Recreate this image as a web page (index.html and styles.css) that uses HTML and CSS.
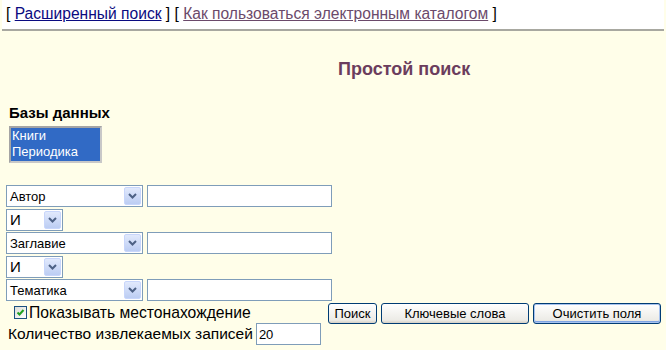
FILE: index.html
```html
<!DOCTYPE html>
<html>
  <head>
    <title>Простой поиск</title>
    <link rel="stylesheet" href="styles.css">
  </head>

  <body>
    <div id="topbar">
      [ <a href="#" class="link">Расширенный поиск</a> ]
      [ <a href="#" class="link visited">Как пользоваться электронным каталогом</a> ]
    </div>

    <h1 id="title">Простой поиск</h1>

    <div id="databases">
      <p id="databases_head">Базы данных</p>
      <div class="listbox">
        <div class="listbox_item">Книги</div>
        <div class="listbox_item">Периодика</div>
      </div>
    </div>

    <div id="search">
      <div class="row">
        <span class="combo combo_wide">
          <span class="combo_value">Автор</span>
          <span class="combo_btn"><svg width="9" height="6" viewBox="0 0 9 6"><path d="M1 1 L4.5 4.5 L8 1" fill="none" stroke="#4d6185" stroke-width="2"/></svg></span>
        </span>
        <span class="field field_wide"></span>
      </div>
      <div class="row">
        <span class="combo combo_small">
          <span class="combo_value">И</span>
          <span class="combo_btn"><svg width="9" height="6" viewBox="0 0 9 6"><path d="M1 1 L4.5 4.5 L8 1" fill="none" stroke="#4d6185" stroke-width="2"/></svg></span>
        </span>
      </div>
      <div class="row">
        <span class="combo combo_wide">
          <span class="combo_value">Заглавие</span>
          <span class="combo_btn"><svg width="9" height="6" viewBox="0 0 9 6"><path d="M1 1 L4.5 4.5 L8 1" fill="none" stroke="#4d6185" stroke-width="2"/></svg></span>
        </span>
        <span class="field field_wide"></span>
      </div>
      <div class="row">
        <span class="combo combo_small">
          <span class="combo_value">И</span>
          <span class="combo_btn"><svg width="9" height="6" viewBox="0 0 9 6"><path d="M1 1 L4.5 4.5 L8 1" fill="none" stroke="#4d6185" stroke-width="2"/></svg></span>
        </span>
      </div>
      <div class="row">
        <span class="combo combo_wide">
          <span class="combo_value">Тематика</span>
          <span class="combo_btn"><svg width="9" height="6" viewBox="0 0 9 6"><path d="M1 1 L4.5 4.5 L8 1" fill="none" stroke="#4d6185" stroke-width="2"/></svg></span>
        </span>
        <span class="field field_wide"></span>
      </div>

      <div id="bottom">
        <div id="options">
          <label class="check_row">
            <span class="checkbox"><svg width="9" height="9" viewBox="0 0 9 9"><path d="M1.5 4.5 L3.5 6.5 L7.5 2" fill="none" stroke="#21a121" stroke-width="2"/></svg></span>
            Показывать местонахождение
          </label>
          <div class="count_row">
            <span class="count_label">Количество извлекаемых записей</span>
            <span class="field field_count">20</span>
          </div>
        </div>
        <div id="buttons">
          <button class="btn btn_search">Поиск</button>
          <button class="btn btn_keywords">Ключевые слова</button>
          <button class="btn btn_clear btn_default">Очистить поля</button>
        </div>
      </div>
    </div>
  </body>
</html>
```

FILE: styles.css
```css
* {
  font-family: Arial, "Liberation Sans", Helvetica, sans-serif;
  box-sizing: border-box;
}

p {
  margin: 0;
  padding: 0;
}

body {
  margin: 0;
  background-color: #fffee9;
  color: #000000;
}

#topbar {
  background-color: #ffffff;
  height: 31px;
  padding: 5px 4px 0 4px;
  font-size: 15.6px;
  border-bottom: 2px solid #a8a8a0;
  margin: 0 2px;
}

.link {
  color: #0a0a80;
}

.link.visited {
  color: #6b4a6b;
}

#title {
  margin: 28px 0 0 338px;
  font-size: 18px;
  font-weight: bold;
  color: #6b3d5d;
}

#databases {
  margin: 24px 0 0 9px;
}

#databases_head {
  font-size: 15px;
  font-weight: bold;
  line-height: 18px;
}

.listbox {
  margin-top: 4px;
  width: 93px;
  height: 37px;
  border: 2px solid #a4a4a4;
  border-color: #a4a4a4 #c8c8c8 #c8c8c8 #a4a4a4;
  background-color: #316ac5;
  padding: 0 0 0 1px;
}

.listbox_item {
  color: #ffffff;
  font-size: 13px;
  line-height: 16px;
}

#search {
  margin: 22px 0 0 6px;
}

.row {
  display: flex;
  gap: 4px;
  margin-bottom: 1.5px;
}

.combo {
  display: flex;
  align-items: center;
  height: 22px;
  border: 1px solid #7f9db9;
  background-color: #ffffff;
  padding: 0 1px 0 3px;
  font-size: 13px;
}

.combo_wide {
  width: 137px;
}

.combo_small {
  width: 57px;
}

.combo_small .combo_value {
  font-size: 15px;
}

.combo_value {
  flex: 1;
}

.combo_btn {
  display: flex;
  align-items: center;
  justify-content: center;
  width: 17px;
  height: 18px;
  border-radius: 2px;
  background: linear-gradient(#e1e9fc, #bccdf3);
  border: 1px solid #c8d6fb;
}

.field {
  display: block;
  height: 22px;
  border: 1px solid #7f9db9;
  background-color: #ffffff;
}

.field_wide {
  width: 185px;
}

#bottom {
  display: flex;
  gap: 5px;
  margin-top: 1.5px;
}

#options {
  width: 317px;
}

.check_row {
  display: flex;
  align-items: center;
  gap: 2px;
  padding-left: 8px;
  height: 20px;
  font-size: 15.7px;
  white-space: nowrap;
}

.checkbox {
  display: flex;
  align-items: center;
  justify-content: center;
  width: 13px;
  height: 13px;
  border: 1px solid #1c5180;
  background: linear-gradient(135deg, #dcdcd7, #ffffff);
}

.count_row {
  display: flex;
  align-items: center;
  gap: 3px;
  padding-left: 2px;
  font-size: 15.5px;
  white-space: nowrap;
}

.field_count {
  flex-shrink: 0;
  width: 65px;
  height: 22px;
  font-size: 13px;
  padding: 3px 2px;
}

#buttons {
  display: flex;
  gap: 4px;
}

.btn {
  height: 21px;
  border: 1px solid #003c74;
  border-radius: 3px;
  background: linear-gradient(#ffffff, #ecebe6 85%, #d6d0c5);
  font-size: 13px;
  padding: 0;
  color: #000000;
}

.btn_search {
  width: 49px;
}

.btn_keywords {
  width: 148px;
}

.btn_clear {
  width: 128px;
}

.btn_default {
  box-shadow: inset 0 0 0 1px #a8c3ef, inset 0 -1px 0 1px #7fa4e3;
}
```
